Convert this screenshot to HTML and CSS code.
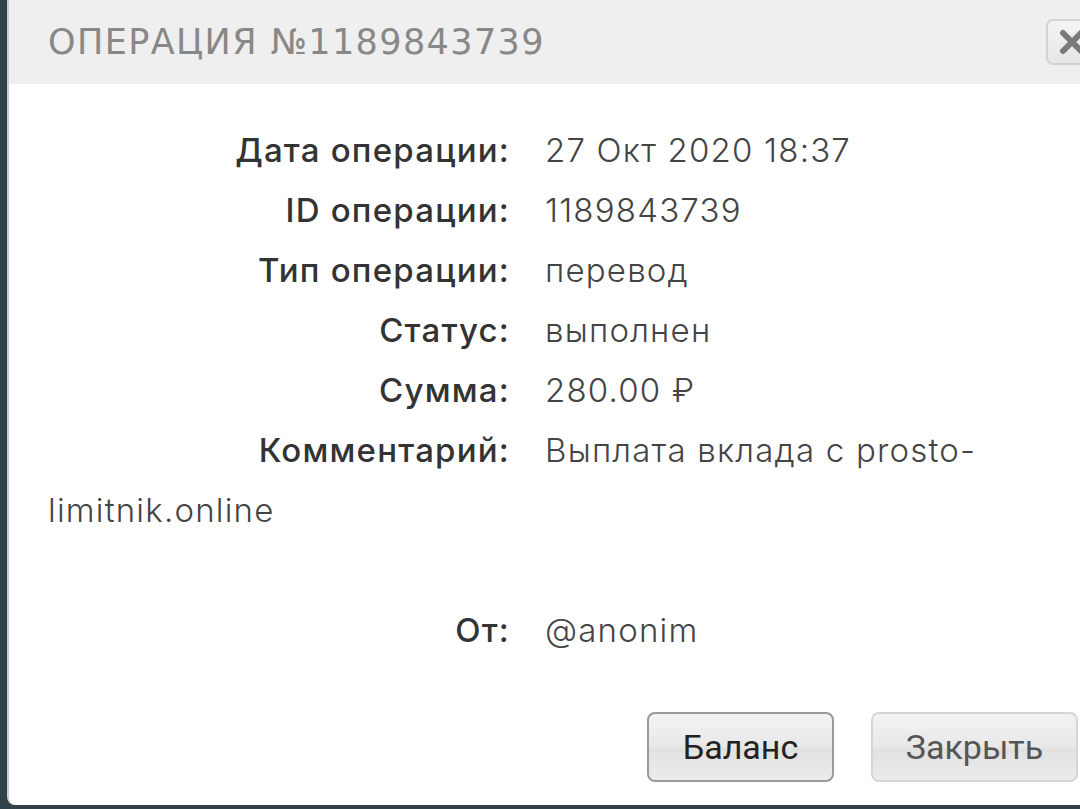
FILE: index.html
```html
<!DOCTYPE html>
<html lang="ru">
<head>
    <meta charset="UTF-8">
    <meta name="viewport" content="width=device-width, initial-scale=1.0">
    <title>Операция №1189843739</title>
    <link rel="stylesheet" href="styles.css">
</head>
<body>

    <div class="dialog">
        <div class="dialog-header">
            <h2 class="dialog-title">Операция №1189843739</h2>
            <button type="button" class="btn-close" title="Закрыть">
                <svg width="28" height="28" viewBox="0 0 28 28">
                    <path d="M5 5 L23 23 M23 5 L5 23" stroke="#7a7a7a" stroke-width="6" stroke-linecap="round"/>
                </svg>
            </button>
        </div>

        <div class="dialog-body">
            <div class="row"><span class="label">Дата операции:</span>27 Окт 2020 18:37</div>
            <div class="row"><span class="label">ID операции:</span>1189843739</div>
            <div class="row"><span class="label">Тип операции:</span>перевод</div>
            <div class="row"><span class="label">Статус:</span>выполнен</div>
            <div class="row"><span class="label">Сумма:</span>280.00 ₽</div>
            <div class="row comment"><span class="label">Комментарий:</span>Выплата вклада с prosto-limitnik.online</div>
            <div class="row"><span class="label">От:</span>@anonim</div>
        </div>

        <div class="dialog-buttons">
            <button type="button" class="btn btn-main">Баланс</button>
            <button type="button" class="btn">Закрыть</button>
        </div>
    </div>

</body>
</html>
```

FILE: styles.css
```css
body {
    margin: 0;
    background-color: #33414b;
    font-family: Inter, "Open Sans", Arial, sans-serif;
}

.dialog {
    margin-left: 7px;
    height: 805px;
    background-color: white;
    border-left: 2px solid #c9cdd0;
    border-bottom-left-radius: 8px;
    overflow: hidden;
}

.dialog-header {
    display: flex;
    align-items: center;
    justify-content: space-between;
    height: 84px;
    background-color: #efefef;
    padding-left: 39px;
}

.dialog-title {
    margin: 0;
    font-family: "DejaVu Sans", sans-serif;
    font-weight: normal;
    font-size: 35px;
    letter-spacing: 1.4px;
    color: #888;
    text-transform: uppercase;
}

.btn-close {
    width: 46px;
    height: 46px;
    margin-right: -12px;
    padding: 0 0 0 10px;
    text-align: left;
    border: 2px solid #d2d2d2;
    border-radius: 7px;
    background: linear-gradient(#f4f4f4, #e6e6e6);
}

.btn-close svg {
    display: block;
}

.dialog-body {
    padding: 36px 40px 0 39px;
    font-size: 33px;
    letter-spacing: 1.2px;
    line-height: 60px;
    color: #444;
    font-weight: 300;
}

.label {
    display: inline-block;
    width: 462px;
    margin-right: 35px;
    text-align: right;
    font-weight: 500;
    color: #333;
}

.comment {
    margin-bottom: 60px;
}

.dialog-buttons {
    display: flex;
    justify-content: flex-end;
    gap: 37px;
    margin-top: 52px;
    margin-right: 2px;
}

.btn {
    width: 207px;
    height: 70px;
    padding: 0;
    font-family: Roboto, sans-serif;
    font-size: 34px;
    color: #555;
    border: 2px solid #d6d6d6;
    border-radius: 8px;
    background: linear-gradient(#f3f3f3, #e8e8e8 50%, #e1e1e1 52%, #ececec);
}

.btn-main {
    width: 187px;
    color: #222;
    border-color: #9a9a9a;
}
```
